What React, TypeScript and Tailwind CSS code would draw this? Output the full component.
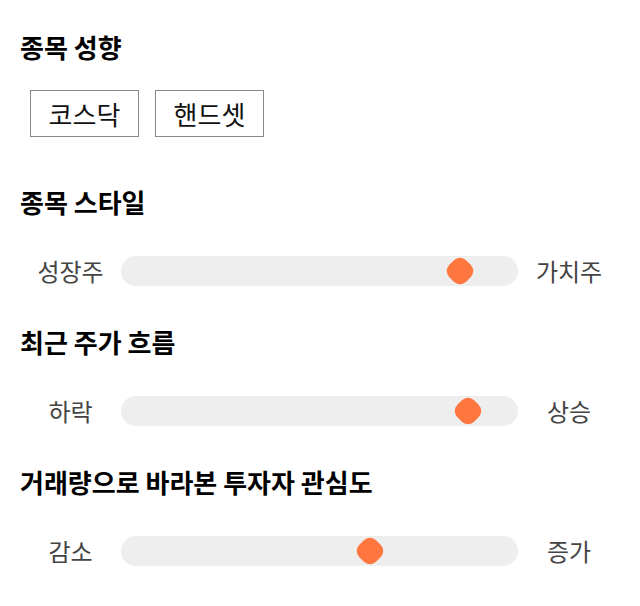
import React from 'react';

const sliders = [
  { title: '종목 스타일', left: '성장주', right: '가치주', value: 85.4 },
  { title: '최근 주가 흐름', left: '하락', right: '상승', value: 87.4 },
  { title: '거래량으로 바라본 투자자 관심도', left: '감소', right: '증가', value: 62.7 },
];

function Heading({ children }: { children: React.ReactNode }) {
  return <h2 className="text-[26px] font-bold leading-[30px] text-black">{children}</h2>;
}

function Slider({ left, right, value }: { left: string; right: string; value: number }) {
  return (
    <div className="grid grid-cols-[101px_397px_102px] items-center h-[30px]">
      <span className="text-center text-[24px] leading-[30px] text-[#444]">{left}</span>
      <div className="relative h-[30px] rounded-full bg-[#eeeeee]">
        <div
          className="absolute top-1/2 w-[24px] h-[24px] -translate-x-1/2 -translate-y-1/2 rotate-45 rounded-[9px] bg-[#ff763f]"
          style={{ left: `${value}%` }}
        />
      </div>
      <span className="text-center text-[24px] leading-[30px] text-[#444]">{right}</span>
    </div>
  );
}

export default function App() {
  return (
    <div
      className="w-[640px] h-[606px] bg-white px-5 pt-8"
      style={{ fontFamily: '"Noto Sans CJK KR", "Noto Sans", sans-serif' }}
    >
      <Heading>종목 성향</Heading>
      <div className="mt-[28px] ml-[10px] flex gap-4">
        {['코스닥', '핸드셋'].map((tag) => (
          <div
            key={tag}
            className="w-[109px] h-[47px] flex items-center justify-center border border-[#888] text-[26px] text-[#111]"
          >
            {tag}
          </div>
        ))}
      </div>

      {sliders.map((s, i) => (
        <div key={s.title} className={i === 0 ? 'mt-[50px]' : 'mt-[41px]'}>
          <Heading>{s.title}</Heading>
          <div className="mt-[39px]">
            <Slider left={s.left} right={s.right} value={s.value} />
          </div>
        </div>
      ))}
    </div>
  );
}
